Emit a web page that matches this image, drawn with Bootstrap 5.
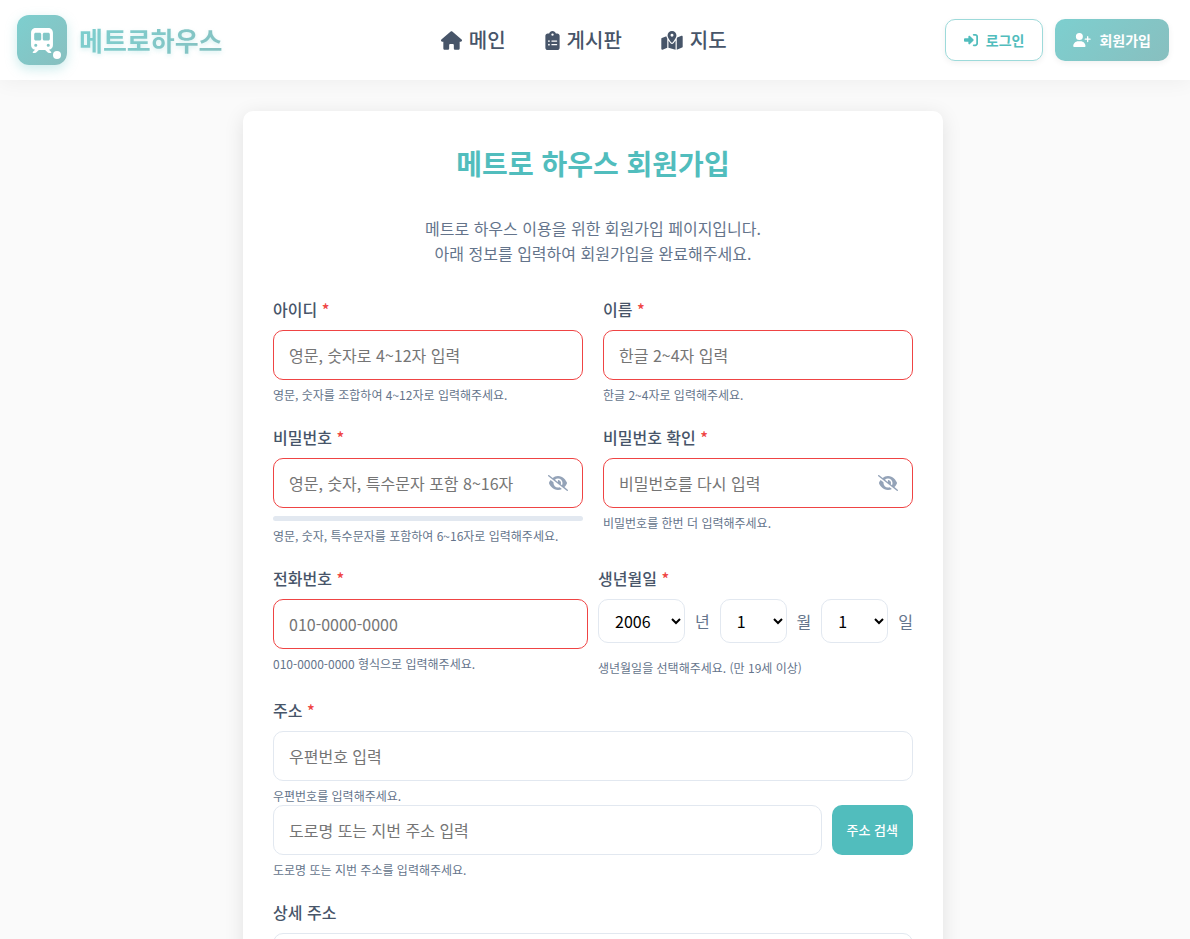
<!DOCTYPE html>
<html lang="ko">
<head>
<meta charset="utf-8">
<meta name="viewport" content="width=device-width, initial-scale=1">
<title>메트로하우스 - 회원가입</title>
<link href="https://cdn.jsdelivr.net/npm/bootstrap@5.3.0/dist/css/bootstrap.min.css" rel="stylesheet">
<style>
  :root { --teal: #51bdbd; --slate: #475569; --muted: #64748b; --line: #e2e8f0; --danger: #ef4444; --grad: linear-gradient(135deg, #7dcfcf, #88bfbf); }
  html { scrollbar-width: none; }
  html::-webkit-scrollbar { display: none; }
  body { font-family: "Noto Sans CJK KR", sans-serif; background: #fafafa; color: var(--slate); line-height: 24px; }
  svg { fill: currentColor; display: block; flex: none; }

  .site-header { background: #fff; height: 80px; padding: 0 21px 0 17px; box-shadow: 0 2px 20px rgba(0,0,0,.05); }
  .logo-box { width: 50px; height: 50px; border-radius: 12px; background: var(--grad); color: #fff; box-shadow: 0 4px 12px rgba(125,207,207,.4); }
  .logo-dot { right: 6px; bottom: 6px; width: 8px; height: 8px; border-radius: 50%; background: #fff; }
  .logo-text { font-size: 26px; font-weight: 700; line-height: 40px; background: var(--grad); -webkit-background-clip: text; background-clip: text; color: transparent; text-shadow: 0 2px 4px rgba(125,207,207,.3); }
  .main-nav { gap: 39px; }
  .main-nav a { font-size: 20px; font-weight: 500; line-height: 30px; gap: 7px; color: var(--slate); }
  .header-actions { gap: 12px; }
  .btn-head { --bs-btn-font-size: 14px; --bs-btn-line-height: 20px; --bs-btn-font-weight: 700; --bs-btn-border-radius: 10px; height: 42px; padding: 0 18px; gap: 8px; border: 1px solid #9ddada; color: var(--teal); background: #fff; box-shadow: 0 2px 6px rgba(0,0,0,.06); }
  .btn-head.filled { border: 0; background: var(--grad); color: #fff; }

  .page { padding: 31px 4px 40px 0; }
  .signup-card { max-width: 700px; background: #fff; border-radius: 10px; padding: 30px; box-shadow: 0 4px 20px rgba(0,0,0,.1); }
  .signup-card h1 { font-size: 28px; font-weight: 700; line-height: 45px; color: var(--teal); margin: 0 0 30px; }
  .intro { line-height: 25px; color: var(--muted); margin-bottom: 30px; }
  .pair { display: grid; grid-template-columns: 1fr 1fr; column-gap: 20px; }
  .pair.tight { column-gap: 10px; }
  .group { margin-bottom: 20px; min-width: 0; }
  .group > label { display: block; font-weight: 500; line-height: 26px; margin-bottom: 8px; color: var(--slate); }
  .req { color: var(--danger); }
  .field { height: 50px; border: 1px solid var(--line); border-radius: 10px; padding: 0 15px; font-size: 16px; width: 100%; background: #fff; color: #000; outline-color: var(--teal); }
  .field::placeholder { color: #757575; }
  .field.bad { border-color: var(--danger); }
  .hint { font-size: 12px; line-height: 18px; color: var(--muted); margin-top: 6px; }
  .eye { right: 15px; top: 0; height: 50px; padding: 0; border: 0; background: none; color: #94a3b8; }
  .strength { height: 5px; border-radius: 3px; background: var(--line); margin-top: 8px; }
  .birth { gap: 10px; margin-bottom: 16px; }
  .pick { height: 44px; width: 67px; border: 1px solid var(--line); border-radius: 10px; padding: 0 12px; font-size: 16px; background: #fff; color: #000; }
  .pick.year { width: 87px; }
  .unit { color: var(--muted); }
  .btn-search { --bs-btn-font-size: 13px; --bs-btn-font-weight: 500; --bs-btn-border-radius: 10px; --bs-btn-color: #fff; --bs-btn-bg: var(--teal); --bs-btn-hover-color: #fff; --bs-btn-hover-bg: #42a9a9; --bs-btn-border-width: 0; --bs-btn-padding-x: 15px; height: 50px; }
  .addr-row { gap: 10px; }
</style>
</head>
<body>
<header class="site-header d-flex align-items-center justify-content-between">
  <a href="#" class="d-flex align-items-center gap-2 text-decoration-none">
    <span class="logo-box position-relative d-flex align-items-center justify-content-center me-1">
      <svg width="22" height="25" viewBox="0 0 448 512"><path d="M96 0C43 0 0 43 0 96V352c0 48 35.2 87.7 81.1 94.9l-46 46C28.1 499.9 33.1 512 43 512H82.7c8.5 0 16.6-3.4 22.6-9.4L160 448H288l54.6 54.6c6 6 14.1 9.4 22.6 9.4H405c10 0 15-12.1 7.9-19.1l-46-46c46-7.1 81.1-46.9 81.1-94.9V96c0-53-43-96-96-96H96zM64 128c0-17.7 14.3-32 32-32h80c17.7 0 32 14.3 32 32v96c0 17.7-14.3 32-32 32H96c-17.7 0-32-14.3-32-32V128zM272 96h80c17.7 0 32 14.3 32 32v96c0 17.7-14.3 32-32 32H272c-17.7 0-32-14.3-32-32V128c0-17.7 14.3-32 32-32zM64 352a32 32 0 1 1 64 0 32 32 0 1 1 -64 0zm288-32a32 32 0 1 1 0 64 32 32 0 1 1 0-64z"/></svg>
      <span class="logo-dot position-absolute"></span>
    </span>
    <span class="logo-text">메트로하우스</span>
  </a>
  <nav class="main-nav d-flex align-items-center" aria-label="주 메뉴">
    <a href="#" class="d-flex align-items-center text-decoration-none"><svg width="21" height="19" viewBox="0 0 576 512"><path d="M575.8 255.5c0 18-15 32.1-32 32.1h-32l.7 160.2c0 2.7-.2 5.4-.5 8.1V472c0 22.1-17.9 40-40 40H456c-1.1 0-2.2 0-3.3-.1c-1.4 .1-2.8 .1-4.2 .1H416 392c-22.1 0-40-17.9-40-40V448 384c0-17.7-14.3-32-32-32H256c-17.7 0-32 14.3-32 32v64 24c0 22.1-17.9 40-40 40H160 128.1c-1.5 0-3-.1-4.5-.2c-1.2 .1-2.4 .2-3.6 .2H104c-22.1 0-40-17.9-40-40V360c0-.9 0-1.9 .1-2.8V287.6H32c-18 0-32-14-32-32.1c0-9 3-17 10-24L266.4 8c7-7 15-8 22-8s15 2 21 7L564.8 231.5c8 7 12 15 11 24z"/></svg><span>메인</span></a>
    <a href="#" class="d-flex align-items-center text-decoration-none"><svg width="15" height="19" viewBox="0 0 384 512"><path d="M192 0c-41.8 0-77.4 26.7-90.5 64H64C28.7 64 0 92.7 0 128V448c0 35.3 28.7 64 64 64H320c35.3 0 64-28.7 64-64V128c0-35.3-28.7-64-64-64H282.5C269.4 26.7 233.8 0 192 0zm0 64a32 32 0 1 1 0 64 32 32 0 1 1 0-64zM72 272a24 24 0 1 1 48 0 24 24 0 1 1 -48 0zm104-16H304c8.8 0 16 7.2 16 16s-7.2 16-16 16H176c-8.8 0-16-7.2-16-16s7.2-16 16-16zM72 368a24 24 0 1 1 48 0 24 24 0 1 1 -48 0zm88 0c0-8.8 7.2-16 16-16H304c8.8 0 16 7.2 16 16s-7.2 16-16 16H176c-8.8 0-16-7.2-16-16z"/></svg><span>게시판</span></a>
    <a href="#" class="d-flex align-items-center text-decoration-none"><svg width="22" height="19" viewBox="0 0 576 512"><path d="M408 120c0 54.6-73.1 151.9-105.2 192c-7.7 9.6-22 9.6-29.6 0C241.1 271.9 168 174.6 168 120C168 53.7 221.7 0 288 0s120 53.7 120 120zm8 80.4c3.5-6.9 6.7-13.8 9.6-20.6c.5-1.2 1-2.5 1.5-3.7l116-46.4C558.9 123.4 576 135 576 152V422.8c0 9.8-6 18.6-15.1 22.3L416 503V200.4zM137.6 138.3c2.4 14.1 7.2 28.3 12.8 41.5c2.9 6.8 6.1 13.7 9.6 20.6V451.8L32.9 502.7C17.1 509 0 497.4 0 480.4V209.6c0-9.8 6-18.6 15.1-22.3l122.6-49zM327.8 332c13.9-17.4 35.7-45.7 56.2-77V504.3L192 449.4V255c20.5 31.3 42.3 59.6 56.2 77c20.5 25.6 59.1 25.6 79.6 0zM288 152a40 40 0 1 0 0-80 40 40 0 1 0 0 80z"/></svg><span>지도</span></a>
  </nav>
  <div class="header-actions d-flex">
    <button type="button" class="btn btn-head d-flex align-items-center"><svg width="14" height="14" viewBox="0 0 512 512"><path d="M217.9 105.9L340.7 228.7c7.2 7.2 11.3 17.1 11.3 27.3s-4.1 20.1-11.3 27.3L217.9 406.1c-6.4 6.4-15 9.9-24 9.9c-18.7 0-33.9-15.2-33.9-33.9l0-62.1L32 320c-17.7 0-32-14.3-32-32l0-64c0-17.7 14.3-32 32-32l128 0 0-62.1c0-18.7 15.2-33.9 33.9-33.9c9 0 17.6 3.6 24 9.9zM352 416l64 0c17.7 0 32-14.3 32-32l0-256c0-17.7-14.3-32-32-32l-64 0c-17.7 0-32-14.3-32-32s14.3-32 32-32l64 0c53 0 96 43 96 96l0 256c0 53-43 96-96 96l-64 0c-17.7 0-32-14.3-32-32s14.3-32 32-32z"/></svg><span>로그인</span></button>
    <button type="button" class="btn btn-head filled d-flex align-items-center"><svg width="18" height="14" viewBox="0 0 640 512"><path d="M96 128a128 128 0 1 1 256 0A128 128 0 1 1 96 128zM0 482.3C0 383.8 79.8 304 178.3 304h91.4C368.2 304 448 383.8 448 482.3c0 16.4-13.3 29.7-29.7 29.7H29.7C13.3 512 0 498.7 0 482.3zM504 312V248H440c-13.3 0-24-10.7-24-24s10.7-24 24-24h64V136c0-13.3 10.7-24 24-24s24 10.7 24 24v64h64c13.3 0 24 10.7 24 24s-10.7 24-24 24H552v64c0 13.3-10.7 24-24 24s-24-10.7-24-24z"/></svg><span>회원가입</span></button>
  </div>
</header>

<svg class="d-none" aria-hidden="true"><symbol id="eye-off" viewBox="0 0 640 512"><path d="M38.8 5.1C28.4-3.1 13.3-1.2 5.1 9.2S-1.2 34.7 9.2 42.9l592 464c10.4 8.2 25.5 6.3 33.7-4.1s6.3-25.5-4.1-33.7L525.6 386.7c39.6-40.6 66.4-86.1 79.9-118.4c3.3-7.9 3.3-16.7 0-24.6c-14.9-35.7-46.2-87.7-93-131.1C465.5 68.8 400.8 32 320 32c-68.2 0-125 26.3-169.3 60.8L38.8 5.1zM223.1 149.5C248.6 126.2 282.7 112 320 112c79.5 0 144 64.5 144 144c0 24.9-6.3 48.3-17.4 68.7L408 294.5c8.4-19.3 10.6-41.4 4.8-63.3c-11.1-41.5-47.8-69.4-88.6-71.1c-5.8-.2-9.2 6.1-7.4 11.7c2.1 6.4 3.3 13.2 3.3 20.3c0 10.2-2.4 19.8-6.6 28.3l-90.3-70.8zM373 389.9c-16.4 6.5-34.3 10.1-53 10.1c-79.5 0-144-64.5-144-144c0-6.9 .5-13.6 1.4-20.2L83.1 161.5C60.3 191.2 44 220.8 34.5 243.7c-3.3 7.9-3.3 16.7 0 24.6c14.9 35.7 46.2 87.7 93 131.1C174.5 443.2 239.2 480 320 480c47.8 0 89.9-12.9 126.2-32.5L373 389.9z"/></symbol></svg>

<main class="page">
  <form class="signup-card mx-auto">
    <h1 class="text-center">메트로 하우스 회원가입</h1>
    <p class="intro text-center">메트로 하우스 이용을 위한 회원가입 페이지입니다.<br>아래 정보를 입력하여 회원가입을 완료해주세요.</p>

    <div class="pair">
      <div class="group">
        <label for="uid">아이디 <span class="req">*</span></label>
        <input id="uid" class="field bad d-block" type="text" placeholder="영문, 숫자로 4~12자 입력">
        <div class="hint">영문, 숫자를 조합하여 4~12자로 입력해주세요.</div>
      </div>
      <div class="group">
        <label for="uname">이름 <span class="req">*</span></label>
        <input id="uname" class="field bad d-block" type="text" placeholder="한글 2~4자 입력">
        <div class="hint">한글 2~4자로 입력해주세요.</div>
      </div>
    </div>

    <div class="pair">
      <div class="group">
        <label for="pw">비밀번호 <span class="req">*</span></label>
        <div class="position-relative">
          <input id="pw" class="field bad d-block" type="password" placeholder="영문, 숫자, 특수문자 포함 8~16자">
          <button type="button" class="eye position-absolute" aria-label="비밀번호 표시"><svg width="20" height="16"><use href="#eye-off"/></svg></button>
        </div>
        <div class="strength"></div>
        <div class="hint">영문, 숫자, 특수문자를 포함하여 6~16자로 입력해주세요.</div>
      </div>
      <div class="group">
        <label for="pw2">비밀번호 확인 <span class="req">*</span></label>
        <div class="position-relative">
          <input id="pw2" class="field bad d-block" type="password" placeholder="비밀번호를 다시 입력">
          <button type="button" class="eye position-absolute" aria-label="비밀번호 확인 표시"><svg width="20" height="16"><use href="#eye-off"/></svg></button>
        </div>
        <div class="hint">비밀번호를 한번 더 입력해주세요.</div>
      </div>
    </div>

    <div class="pair tight">
      <div class="group">
        <label for="tel">전화번호 <span class="req">*</span></label>
        <input id="tel" class="field bad d-block" type="tel" placeholder="010-0000-0000">
        <div class="hint">010-0000-0000 형식으로 입력해주세요.</div>
      </div>
      <div class="group">
        <label for="year">생년월일 <span class="req">*</span></label>
        <div class="birth d-flex align-items-center">
          <select id="year" class="pick year"><option>2006</option></select>
          <label for="year" class="unit">년</label>
          <select id="month" class="pick"><option>1</option></select>
          <label for="month" class="unit">월</label>
          <select id="day" class="pick"><option>1</option></select>
          <label for="day" class="unit">일</label>
        </div>
        <div class="hint">생년월일을 선택해주세요. (만 19세 이상)</div>
      </div>
    </div>

    <div class="group">
      <label for="zip">주소 <span class="req">*</span></label>
      <input id="zip" class="field d-block" type="text" placeholder="우편번호 입력">
      <div class="hint">우편번호를 입력해주세요.</div>
      <div class="addr-row d-flex">
        <input class="field flex-fill" type="text" placeholder="도로명 또는 지번 주소 입력" aria-label="도로명 또는 지번 주소">
        <button type="button" class="btn btn-search text-nowrap">주소 검색</button>
      </div>
      <div class="hint">도로명 또는 지번 주소를 입력해주세요.</div>
    </div>

    <div class="group">
      <label for="detail">상세 주소</label>
      <input id="detail" class="field d-block" type="text">
    </div>
  </form>
</main>
<script src="https://cdn.jsdelivr.net/npm/bootstrap@5.3.0/dist/js/bootstrap.bundle.min.js"></script>
</body>
</html>
